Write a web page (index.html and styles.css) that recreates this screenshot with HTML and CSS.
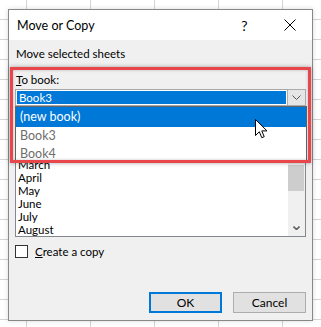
FILE: index.html
```html
<!DOCTYPE html>
<html lang="en">
<head>
  <meta charset="UTF-8" />
  <title>Move or Copy</title>
  <link rel="stylesheet" href="styles.css">
</head>
<body>
  <div class="dialog">
    <div class="titlebar">
      <span class="title">Move or Copy</span>
      <span class="title-btn help">?</span>
      <span class="title-btn">
        <svg class="close-icon" viewBox="0 0 12 12"><path d="M0.5 0.5L11.5 11.5M11.5 0.5L0.5 11.5"/></svg>
      </span>
    </div>

    <div class="content">
      <div class="label">Move selected sheets</div>
      <div class="label gap-lg"><u>T</u>o book:</div>

      <div class="combo">
        <div class="combo-value">Book3</div>
        <div class="combo-btn">
          <svg class="chevron" viewBox="0 0 9 5"><path d="M0.5 0.5L4.5 4.5L8.5 0.5"/></svg>
        </div>
        <ul class="combo-list">
          <li class="is-selected">(new book)</li>
          <li>Book3</li>
          <li>Book4</li>
        </ul>
      </div>

      <div class="label gap-md"><u>B</u>efore sheet:</div>
      <div class="listbox">
        <ul class="sheets">
          <li>January</li>
          <li>February</li>
          <li>March</li>
          <li>April</li>
          <li>May</li>
          <li>June</li>
          <li>July</li>
          <li>August</li>
        </ul>
        <div class="scrollbar">
          <div class="arrow">
            <svg class="arrow-icon" viewBox="0 0 7 4"><path d="M0.5 3.5L3.5 0.5L6.5 3.5"/></svg>
          </div>
          <div class="track"><div class="thumb"></div></div>
          <div class="arrow">
            <svg class="arrow-icon" viewBox="0 0 7 4"><path d="M0.5 0.5L3.5 3.5L6.5 0.5"/></svg>
          </div>
        </div>
      </div>

      <label class="check">
        <span class="check-box"></span>
        <span><u>C</u>reate a copy</span>
      </label>

      <div class="buttons">
        <button class="btn is-default">OK</button>
        <button class="btn">Cancel</button>
      </div>
    </div>

    <!-- annotation around the book picker -->
    <div class="callout"></div>

    <svg class="cursor" viewBox="0 0 13 20"><path d="M0.5 0.5V16.5L4.3 12.8L6.8 18.7L9.2 17.7L6.8 11.9H12Z"/></svg>
  </div>
</body>
</html>
```

FILE: styles.css
```css
* {
  margin: 0; padding: 0; box-sizing: border-box;
}
html, body {
  height: 100%;
}
body {
  font-family: 'Lato', 'Noto Sans', sans-serif;
  font-size: 11.5px;
  color: #000;
  background-color: #fff;
  background-image:
    linear-gradient(to right, #d4d4d4 1px, transparent 1px),
    linear-gradient(to bottom, #d4d4d4 1px, transparent 1px);
  background-size: 64px 20px;
  background-position: 26px 19px;
  padding: 9px 0 0 8px;
  overflow: hidden;
}
.dialog {
  position: relative;
  width: 305px;
  height: 312px;
  border: 1px solid #888;
  box-shadow: 0 0 5px rgba(0, 0, 0, 0.15);
  display: flex;
  flex-direction: column;
}
.titlebar {
  height: 30px;
  background: #fff;
  display: flex;
  align-items: center;
  padding-left: 8px;
}
.title {
  font-size: 12.5px;
  flex: 1;
}
.title-btn {
  width: 45px;
  height: 30px;
  display: flex;
  justify-content: center;
  align-items: center;
  font-size: 14px;
}
.close-icon {
  width: 12px; height: 12px;
  stroke: #000; stroke-width: 1; fill: none;
}
.content {
  flex: 1;
  background: #f0f0f0;
  padding: 7px 6px 7px 6px;
  display: flex;
  flex-direction: column;
}
.label {
  line-height: 14px;
  padding-left: 1px;
}
.gap-lg { margin-top: 12px; }
.gap-md { margin-top: 8px; }

.combo {
  position: relative;
  margin-top: 2px;
  height: 17px;
  display: flex;
  background: #fff;
  border: 1px solid #a8a8a8;
  padding: 1px;
}
.combo-value {
  flex: 1;
  background: #0078d7;
  color: #fff;
  line-height: 13px;
  padding-left: 2px;
}
.combo-btn {
  width: 19px;
  margin: -2px -2px -2px 1px;
  background: #e5e5e5;
  border: 1px solid #acacac;
  display: flex;
  justify-content: center;
  align-items: center;
}
.chevron {
  width: 9px; height: 5px;
  stroke: #555; stroke-width: 1; fill: none;
}
.combo-list {
  position: absolute;
  top: 16px;
  left: -1px;
  right: -2px;
  height: 55px;
  overflow: hidden;
  list-style: none;
  background: #fff;
  border: 1px solid #646464;
  font-size: 12.5px;
  color: #6d6d6d;
}
.combo-list li {
  height: 18px;
  line-height: 18px;
  padding-left: 4px;
}
.combo-list li.is-selected {
  height: 20px;
  line-height: 20px;
  background: #0078d7;
  color: #fff;
}

.listbox {
  margin-top: 3px;
  height: 106px;
  display: flex;
  background: #fff;
  border: 1px solid #828790;
}
.sheets {
  flex: 1;
  list-style: none;
  padding-left: 2px;
}
.sheets li {
  height: 13px;
  line-height: 13px;
}
.scrollbar {
  width: 17px;
  background: #f0f0f0;
  display: flex;
  flex-direction: column;
}
.arrow {
  height: 17px;
  display: flex;
  justify-content: center;
  align-items: center;
}
.arrow-icon {
  width: 7px; height: 4px;
  stroke: #606060; stroke-width: 1.6; fill: none;
}
.track {
  flex: 1;
}
.thumb {
  margin: 16px 1px 0 0;
  height: 26px;
  background: #cdcdcd;
}

.check {
  margin-top: 8px;
  display: flex;
  align-items: center;
  line-height: 13px;
}
.check-box {
  width: 13px; height: 13px;
  border: 1px solid #333;
  background: #fff;
  margin-right: 7px;
}

.buttons {
  margin-top: auto;
  display: flex;
  justify-content: flex-end;
  gap: 11px;
}
.btn {
  width: 73px;
  height: 21px;
  font-family: inherit;
  font-size: 12px;
  color: #000;
  background: #e1e1e1;
  border: 1px solid #adadad;
}
.btn.is-default {
  border: 2px solid #0078d7;
}

.callout {
  position: absolute;
  left: 1px;
  top: 57px;
  width: 301px;
  height: 96px;
  border: 3px solid #e8464a;
  box-shadow: 0 0 4px rgba(0, 0, 0, 0.35), inset 0 0 3px rgba(0, 0, 0, 0.25);
  pointer-events: none;
}
.cursor {
  position: absolute;
  left: 246px;
  top: 109px;
  width: 13px;
  height: 20px;
  fill: #fff;
  stroke: #000;
  stroke-width: 1;
}
```
